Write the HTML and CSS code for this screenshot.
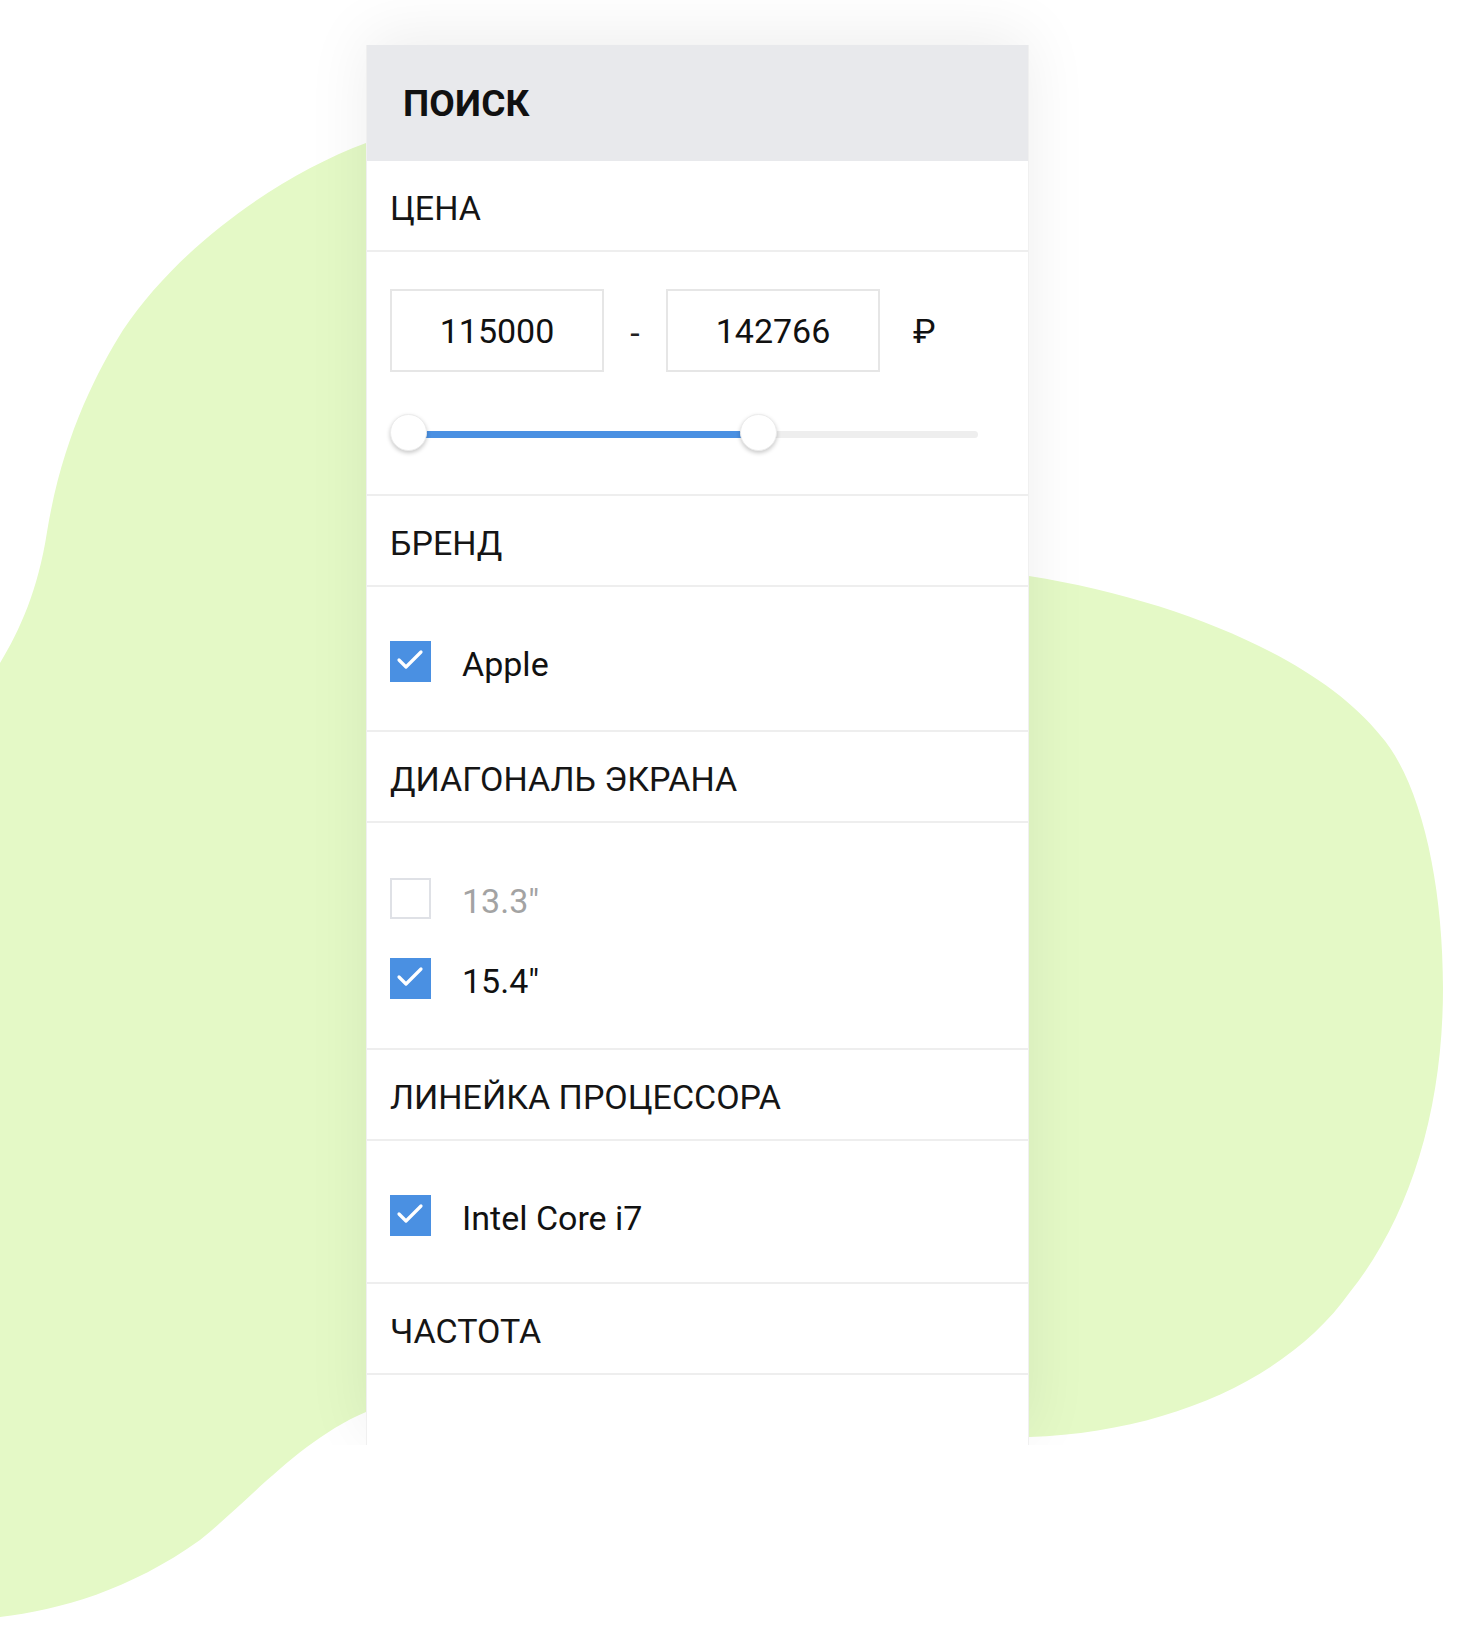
FILE: index.html
```html
<!DOCTYPE html>
<html lang="ru">
<head>
<meta charset="utf-8">
<title>Поиск</title>
<link rel="stylesheet" href="styles.css">
</head>
<body>
<div class="stage">
  <svg class="blob" width="1478" height="1632" viewBox="0 0 1478 1632" aria-hidden="true">
    <path d="M366 143 C280 175 180 245 123 330 C95 375 62 440 47 532 C38 590 20 630 0 663 L0 1617 C60 1610 130 1590 200 1540 C250 1500 300 1440 366 1412 L1029 1437 C1170 1432 1290 1377 1350 1292 C1410 1217 1443 1110 1443 988 C1443 880 1420 780 1380 735 C1320 660 1180 600 1029 576 Z" fill="#e4f9c6"/>
  </svg>

  <div class="panel">
    <div class="panel-head"><h1 class="panel-title">ПОИСК</h1></div>

    <section class="group">
      <div class="group-title">ЦЕНА</div>
      <div class="group-body price-body">
        <div class="price-row">
          <input class="price-input" type="text" value="115000">
          <span class="price-dash">-</span>
          <input class="price-input" type="text" value="142766">
          <span class="price-cur">₽</span>
        </div>
        <div class="slider">
          <div class="slider-track"></div>
          <div class="slider-fill"></div>
          <div class="slider-thumb thumb-min"></div>
          <div class="slider-thumb thumb-max"></div>
        </div>
      </div>
    </section>

    <section class="group">
      <div class="group-title">БРЕНД</div>
      <div class="group-body list-body">
        <label class="item">
          <span class="box box-on"><svg viewBox="0 0 41 41" width="41" height="41"><polyline points="9,19 16,26 31,11" fill="none" stroke="#fff" stroke-width="3.2" stroke-linecap="round" stroke-linejoin="round"/></svg></span>
          <span class="item-label">Apple</span>
        </label>
      </div>
    </section>

    <section class="group">
      <div class="group-title">ДИАГОНАЛЬ ЭКРАНА</div>
      <div class="group-body list-body list-body-tall">
        <label class="item item-off">
          <span class="box box-off"></span>
          <span class="item-label">13.3"</span>
        </label>
        <label class="item">
          <span class="box box-on"><svg viewBox="0 0 41 41" width="41" height="41"><polyline points="9,19 16,26 31,11" fill="none" stroke="#fff" stroke-width="3.2" stroke-linecap="round" stroke-linejoin="round"/></svg></span>
          <span class="item-label">15.4"</span>
        </label>
      </div>
    </section>

    <section class="group">
      <div class="group-title">ЛИНЕЙКА ПРОЦЕССОРА</div>
      <div class="group-body list-body list-body-short">
        <label class="item">
          <span class="box box-on"><svg viewBox="0 0 41 41" width="41" height="41"><polyline points="9,19 16,26 31,11" fill="none" stroke="#fff" stroke-width="3.2" stroke-linecap="round" stroke-linejoin="round"/></svg></span>
          <span class="item-label">Intel Core i7</span>
        </label>
      </div>
    </section>

    <section class="group">
      <div class="group-title">ЧАСТОТА</div>
      <div class="group-body empty-body"></div>
    </section>
  </div>
</div>
</body>
</html>
```

FILE: styles.css
```css
* { box-sizing: border-box; }

html, body {
  margin: 0;
  padding: 0;
  background: #ffffff;
}

body {
  font-family: Roboto, "Liberation Sans", Arial, sans-serif;
  color: #1a1a1a;
}

.stage {
  position: relative;
  width: 1478px;
  height: 1632px;
  overflow: hidden;
  padding-top: 45px;
}

.blob {
  position: absolute;
  left: 0;
  top: 0;
}

.panel {
  position: relative;
  z-index: 1;
  margin-left: 366px;
  width: 663px;
  background: #ffffff;
  border-left: 1px solid #f0f0f0;
  border-right: 1px solid #f0f0f0;
  box-shadow: 0 -10px 60px rgba(0, 0, 0, 0.07);
  clip-path: inset(-100px -100px 0 -100px);
}

.panel-head {
  height: 116px;
  background: #e8e9ec;
  display: flex;
  align-items: center;
  padding-left: 36px;
}

.panel-title {
  margin: 0;
  font-size: 37px;
  font-weight: 700;
  color: #111;
  letter-spacing: 0.2px;
}

.group-title {
  height: 91px;
  padding: 5px 0 0 23px;
  border-bottom: 2px solid #eeeeee;
  display: flex;
  align-items: center;
  font-size: 34px;
  color: #151515;
}

.group-body {
  border-bottom: 2px solid #eeeeee;
  padding-left: 23px;
}

.price-body {
  padding-top: 37px;
  padding-bottom: 43px;
}

.price-row {
  display: flex;
  align-items: center;
  height: 83px;
}

.price-input {
  width: 214px;
  height: 83px;
  border: 2px solid #e6e6e6;
  border-radius: 0;
  background: #fff;
  font-family: inherit;
  font-size: 34px;
  color: #111;
  text-align: center;
  padding: 0;
  outline: none;
}

.price-dash {
  width: 62px;
  text-align: center;
  font-size: 34px;
  color: #222;
  padding-top: 4px;
}

.price-cur {
  margin-left: 33px;
  font-size: 34px;
  color: #111;
}

.slider {
  position: relative;
  margin-top: 42px;
  width: 588px;
  height: 37px;
}

.slider-track {
  position: absolute;
  left: 18px;
  right: 0;
  top: 17px;
  height: 7px;
  border-radius: 4px;
  background: #eeeeee;
}

.slider-fill {
  position: absolute;
  left: 18px;
  width: 350px;
  top: 17px;
  height: 7px;
  background: #4a90e2;
}

.slider-thumb {
  position: absolute;
  top: 0;
  width: 37px;
  height: 37px;
  border-radius: 50%;
  background: #fff;
  border: 1px solid #ececec;
  box-shadow: 0 2px 4px rgba(0, 0, 0, 0.22);
}

.thumb-min { left: 0; }
.thumb-max { left: 350px; }

.list-body {
  padding-top: 34px;
  padding-bottom: 29px;
}

.list-body-tall {
  padding-top: 35px;
  padding-bottom: 30px;
}

.list-body-short {
  padding-bottom: 27px;
}

.item {
  height: 80px;
  display: flex;
  align-items: center;
  gap: 31px;
}

.box {
  width: 41px;
  height: 41px;
  flex: none;
  display: block;
}

.box svg { display: block; }

.box-on {
  background: #4a90e2;
}

.box-off {
  background: #fff;
  border: 2px solid #dfe1e6;
}

.item-label {
  font-size: 34px;
  color: #111;
  padding-top: 6px;
}

.item-off .item-label {
  color: #a3a3a3;
}

.empty-body {
  height: 70px;
  border-bottom: none;
}
```
